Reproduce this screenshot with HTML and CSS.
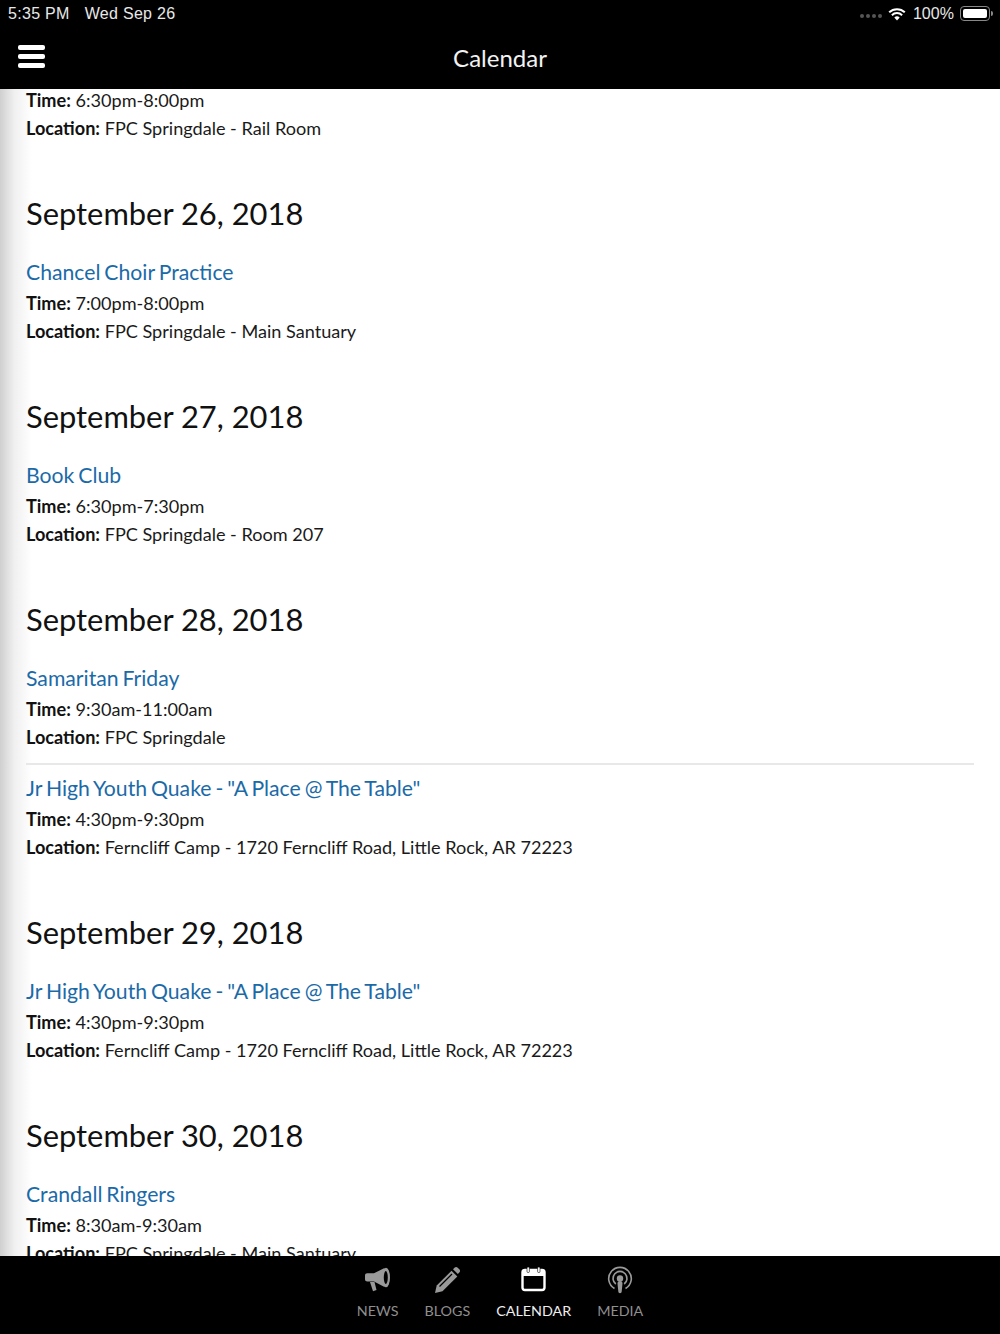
FILE: index.html
```html
<!DOCTYPE html>
<html lang="en">
<head>
    <meta charset="UTF-8">
    <meta name="viewport" content="width=device-width, initial-scale=1.0">
    <title>Calendar</title>
    <link rel="stylesheet" href="styles.css">
</head>
<body>
    <div class="app">
        <div class="statusbar">
            <div class="status-left"><span>5:35 PM</span><span>Wed Sep 26</span></div>
            <div class="status-right">
                <div class="signal"><i></i><i></i><i></i><i></i></div>
                <svg class="wifi" width="18" height="14" viewBox="0 0 18 14">
                    <path d="M9 13.500 6.300 10.600a3.900 3.900 0 0 1 5.400 0z" fill="#fff"/>
                    <path d="M3.900 8.200a7.300 7.300 0 0 1 10.200 0" fill="none" stroke="#fff" stroke-width="2"/>
                    <path d="M1.200 5.300a11.200 11.200 0 0 1 15.600 0" fill="none" stroke="#fff" stroke-width="2"/>
                </svg>
                <span>100%</span>
                <div class="battery"><div class="battery-fill"></div></div>
                <div class="battery-cap"></div>
            </div>
        </div>
        <div class="navbar">
            <div class="hamburger"><i></i><i></i><i></i></div>
            <div class="nav-title">Calendar</div>
        </div>

        <div class="content">
            <div class="shadow"></div>
            <div class="event-list">
                <div class="day day-first">
                    <div class="event">
                        <p><b>Time:</b> 6:30pm-8:00pm</p>
                        <p><b>Location:</b> FPC Springdale - Rail Room</p>
                    </div>
                </div>
                <div class="day">
                    <h2>September 26, 2018</h2>
                    <div class="event">
                        <a href="#">Chancel Choir Practice</a>
                        <p><b>Time:</b> 7:00pm-8:00pm</p>
                        <p><b>Location:</b> FPC Springdale - Main Santuary</p>
                    </div>
                </div>
                <div class="day">
                    <h2>September 27, 2018</h2>
                    <div class="event">
                        <a href="#">Book Club</a>
                        <p><b>Time:</b> 6:30pm-7:30pm</p>
                        <p><b>Location:</b> FPC Springdale - Room 207</p>
                    </div>
                </div>
                <div class="day">
                    <h2>September 28, 2018</h2>
                    <div class="event">
                        <a href="#">Samaritan Friday</a>
                        <p><b>Time:</b> 9:30am-11:00am</p>
                        <p><b>Location:</b> FPC Springdale</p>
                    </div>
                    <div class="event event-next">
                        <a href="#">Jr High Youth Quake - "A Place @ The Table"</a>
                        <p><b>Time:</b> 4:30pm-9:30pm</p>
                        <p><b>Location:</b> Ferncliff Camp - 1720 Ferncliff Road, Little Rock, AR 72223</p>
                    </div>
                </div>
                <div class="day">
                    <h2>September 29, 2018</h2>
                    <div class="event">
                        <a href="#">Jr High Youth Quake - "A Place @ The Table"</a>
                        <p><b>Time:</b> 4:30pm-9:30pm</p>
                        <p><b>Location:</b> Ferncliff Camp - 1720 Ferncliff Road, Little Rock, AR 72223</p>
                    </div>
                </div>
                <div class="day">
                    <h2>September 30, 2018</h2>
                    <div class="event">
                        <a href="#">Crandall Ringers</a>
                        <p><b>Time:</b> 8:30am-9:30am</p>
                        <p><b>Location:</b> FPC Springdale - Main Santuary</p>
                    </div>
                </div>
            </div>
        </div>

        <div class="tabbar">
            <div class="tab">
                <svg width="30" height="26" viewBox="0 0 30 26">
                    <path d="M2 9.500c0-1.400 1-2.200 2.200-2.200H11L21.500 2v19L11 15.500H4.200C3 15.500 2 14.700 2 13.300z" fill="#9a9a9a"/>
                    <path d="M7 16h4.500l2 8-3.500 1.200z" fill="#9a9a9a"/>
                    <ellipse cx="23" cy="11.500" rx="4" ry="9.800" fill="#9a9a9a"/>
                    <ellipse cx="22.800" cy="11.500" rx="2" ry="6.500" fill="#000"/>
                </svg>
                <span>NEWS</span>
            </div>
            <div class="tab">
                <svg width="28" height="28" viewBox="0 0 28 28">
                    <path d="M2 27l1.700-7.500L18.500 4.700l5.800 5.800L9.500 25.300z" fill="#9a9a9a"/>
                    <path d="M20 3.200l1.500-1.500a2.300 2.300 0 0 1 3.200 0l1.600 1.600a2.300 2.300 0 0 1 0 3.200L24.800 8z" fill="#9a9a9a"/>
                    <path d="M6.500 20.500 19 8" stroke="#000" stroke-width="1.200"/>
                </svg>
                <span>BLOGS</span>
            </div>
            <div class="tab tab-active">
                <svg width="26" height="26" viewBox="0 0 26 26">
                    <rect x="1.500" y="4" width="22" height="20" rx="2.500" fill="none" stroke="#fff" stroke-width="2.400"/>
                    <rect x="1.500" y="4" width="22" height="6" fill="#fff"/>
                    <rect x="6" y="1" width="2.400" height="5.500" rx="1" fill="#fff" stroke="#000" stroke-width=".6"/>
                    <rect x="16.600" y="1" width="2.400" height="5.500" rx="1" fill="#fff" stroke="#000" stroke-width=".6"/>
                </svg>
                <span>CALENDAR</span>
            </div>
            <div class="tab">
                <svg width="26" height="28" viewBox="0 0 26 28">
                    <path d="M7.500 22.500a11.300 11.300 0 1 1 11 0" fill="none" stroke="#9a9a9a" stroke-width="1.600"/>
                    <path d="M8.800 18a7 7 0 1 1 8.400 0" fill="none" stroke="#9a9a9a" stroke-width="1.600"/>
                    <circle cx="13" cy="12.500" r="3.200" fill="#9a9a9a"/>
                    <path d="M10.500 17.500a2.500 2.500 0 0 1 5 0l-.8 8a1.700 1.700 0 0 1-3.400 0z" fill="#9a9a9a"/>
                </svg>
                <span>MEDIA</span>
            </div>
        </div>
    </div>
</body>
</html>
```

FILE: styles.css
```css
* {
    box-sizing: border-box;
}
html, body {
    margin: 0;
    padding: 0;
}
body {
    font-family: Lato, "Open Sans", sans-serif;
    background: #fff;
    color: #111;
}
.app {
    display: flex;
    flex-direction: column;
    width: 1000px;
    height: 1334px;
    overflow: hidden;
}

/* status bar + nav */
.statusbar {
    display: flex;
    justify-content: space-between;
    align-items: center;
    height: 25px;
    padding: 2px 7px 0 8px;
    background: #000;
    color: #e8e8e8;
    font-family: "Liberation Sans", Arial, sans-serif;
    font-size: 16px;
    letter-spacing: 0.3px;
}
.status-left {
    display: flex;
    gap: 15px;
}
.status-right {
    display: flex;
    align-items: center;
    letter-spacing: 0.05px;
}
.signal {
    display: flex;
    gap: 2px;
    margin: 5px 6px 0 0;
}
.signal i {
    width: 4px;
    height: 4px;
    border-radius: 50%;
    background: #555;
}
.wifi {
    margin-right: 7px;
}
.battery {
    width: 30px;
    height: 15px;
    margin-left: 6px;
    padding: 2px;
    border: 1px solid #888;
    border-radius: 4px;
}
.battery-fill {
    height: 100%;
    border-radius: 2px;
    background: #fff;
}
.battery-cap {
    width: 2px;
    height: 5px;
    margin-left: 1px;
    border-radius: 0 2px 2px 0;
    background: #888;
}
.navbar {
    display: flex;
    align-items: center;
    justify-content: center;
    position: relative;
    height: 64px;
    background: #000;
}
.nav-title {
    color: #f2f2f2;
    font-size: 24px;
}
.hamburger {
    position: absolute;
    left: 18px;
    top: 20px;
    display: flex;
    flex-direction: column;
    gap: 4px;
}
.hamburger i {
    display: block;
    width: 27px;
    height: 5px;
    border-radius: 2px;
    background: #fff;
}

/* scrolling list */
.content {
    position: relative;
    flex: 1;
    min-height: 0;
    overflow: hidden;
    background: #fff;
}
.shadow {
    position: absolute;
    left: 0;
    top: 0;
    bottom: 0;
    width: 32px;
    background: linear-gradient(to right, #cfcfcf, #f0f0f0 45%, #fff);
    pointer-events: none;
}
.event-list {
    position: relative;
    margin-top: -2px;
    padding: 0 26px;
}
.day {
    padding-top: 39px;
    padding-bottom: 14px;
}
.day-first {
    padding-top: 0;
}
h2 {
    margin: 0 0 25px;
    font-size: 30.900px;
    font-weight: 400;
    line-height: 38px;
    color: #111;
}
.event a {
    display: block;
    margin-bottom: 3px;
    font-size: 21.200px;
    line-height: 29px;
    word-spacing: -1.500px;
    color: #1b6aa8;
    text-decoration: none;
}
.event p {
    margin: 0;
    font-size: 18.100px;
    line-height: 27.500px;
    color: #1a1a1a;
}
.event b {
    font-weight: 700;
    color: #111;
}
.event-next {
    margin-top: 12px;
    padding-top: 9px;
    border-top: 2px solid #e8e8e8;
}

/* bottom tabs */
.tabbar {
    display: flex;
    justify-content: center;
    gap: 26px;
    height: 78px;
    padding-top: 10px;
    background: #000;
    color: #8f8f8f;
    font-size: 14.300px;
}
.tab {
    display: flex;
    flex-direction: column;
    align-items: center;
    justify-content: space-between;
    height: 53px;
}
.tab-active {
    color: #eee;
}
```
